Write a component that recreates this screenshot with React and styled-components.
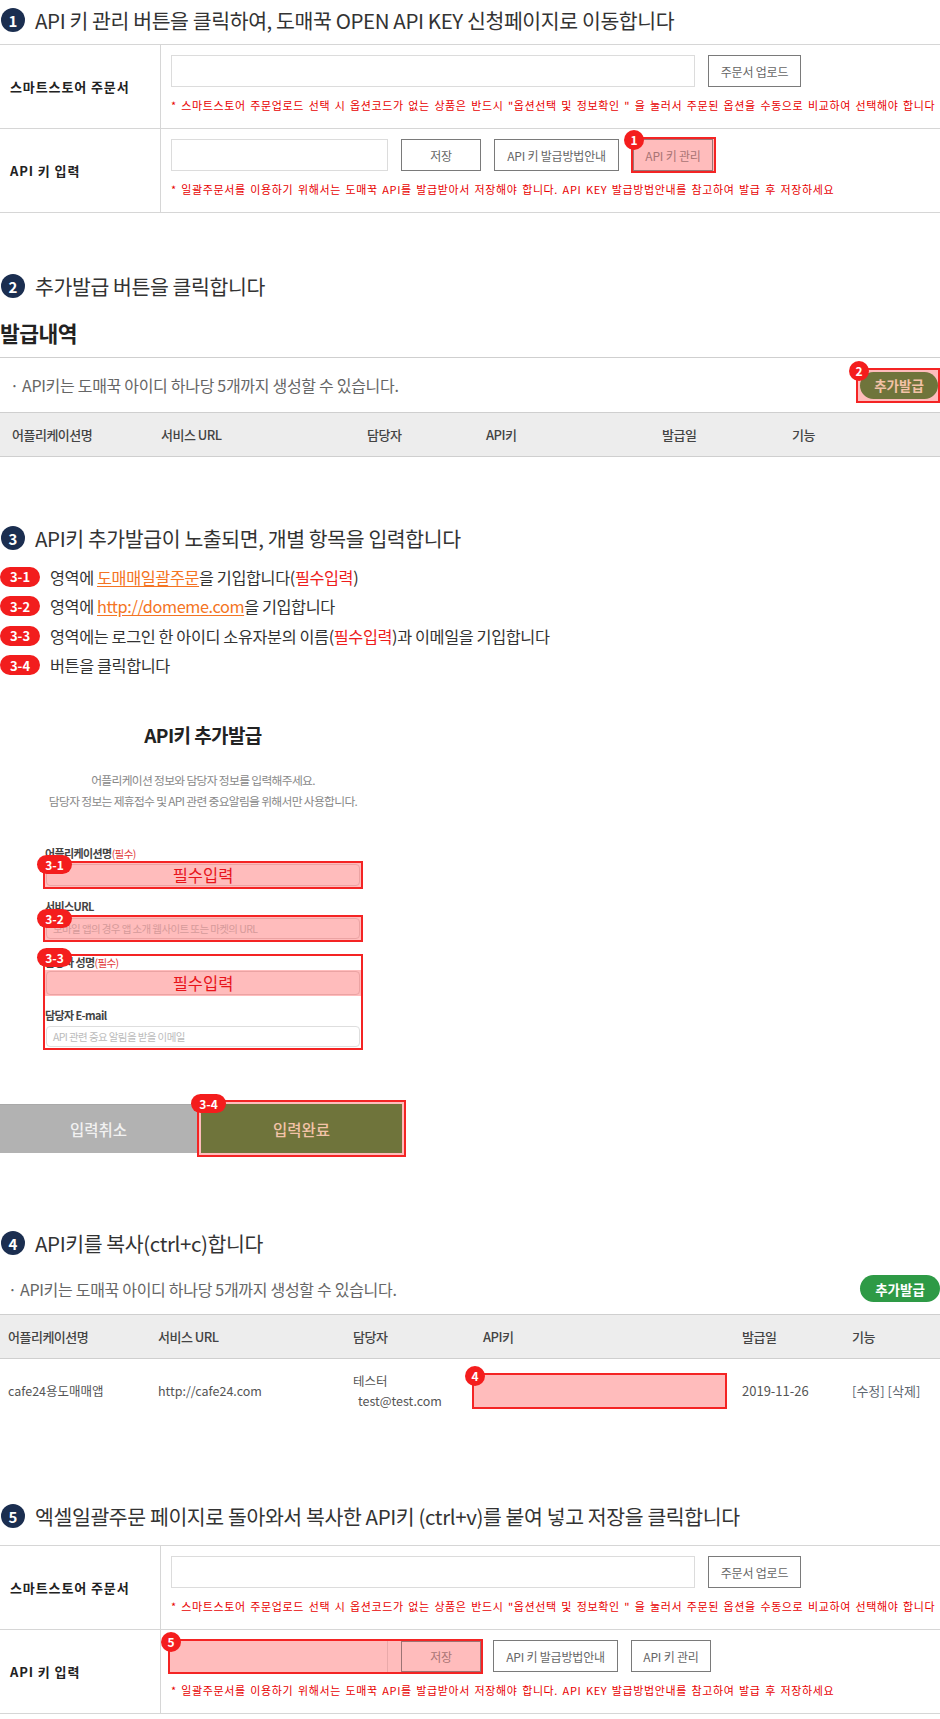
import React from 'react';
import styled, { createGlobalStyle } from 'styled-components';

const GlobalStyle = createGlobalStyle`
  * { box-sizing: border-box; }
  body {
    margin: 0;
    background: #fff;
    font-family: "Noto Sans CJK KR", "Noto Sans", sans-serif;
    color: #333;
  }
`;

const Page = styled.div`
  width: 940px;
  padding-bottom: 5px;
`;

const StepTitle = styled.h2`
  display: flex;
  align-items: center;
  gap: 10px;
  height: 40px;
  margin: ${p => p.$top || 0}px 0 ${p => p.$bottom || 0}px;
  font-size: 20.5px;
  font-weight: 400;
  letter-spacing: -0.4px;
  color: #333;
  white-space: nowrap;
`;

const StepNum = styled.span`
  flex: none;
  width: 24px;
  height: 24px;
  margin-left: 1px;
  border-radius: 50%;
  background: #1b2e50;
  color: #fff;
  font-size: 15px;
  font-weight: 700;
  letter-spacing: 0;
  display: flex;
  align-items: center;
  justify-content: center;
`;

/* ---------- form table (steps 1 & 5) ---------- */

const FormTable = styled.div`
  border-top: 1px solid #d6d6d6;
`;

const FormRow = styled.div`
  display: grid;
  grid-template-columns: 161px 1fr;
  border-bottom: 1px solid #d6d6d6;
`;

const RowLabel = styled.div`
  display: flex;
  align-items: center;
  padding-left: 10px;
  border-right: 1px solid #d6d6d6;
  font-size: 13px;
  font-weight: 700;
  letter-spacing: 0.9px;
  color: #222;
`;

const RowBody = styled.div`
  padding: 10px 10px 15px;
`;

const Controls = styled.div`
  display: flex;
  align-items: center;
  gap: 13px;
  height: 32px;
`;

const TextBox = styled.div`
  flex: none;
  width: ${p => p.$w}px;
  height: ${p => p.$h || 32}px;
  border: 1px solid #dcdcdc;
  background: #fff;
`;

const TintedBox = styled.div`
  flex: none;
  width: ${p => p.$w}px;
  height: 31px;
  border-right: 1px solid #e9a9a9;
`;

const GrayButton = styled.button`
  flex: none;
  width: ${p => p.$w}px;
  height: ${p => p.$h || 32}px;
  padding: 0;
  border: 1px solid ${p => (p.$tinted ? '#9c7474' : '#7a7a7a')};
  background: ${p => (p.$tinted ? 'transparent' : '#fff')};
  color: ${p => (p.$tinted ? '#a97474' : '#666')};
  font-family: inherit;
  font-size: 12px;
  letter-spacing: -0.2px;
`;

const Note = styled.p`
  margin: 10px 0 0;
  height: 16px;
  line-height: 16px;
  font-size: 11px;
  letter-spacing: 0.62px;
  word-spacing: 1.5px;
  color: #e80000;
  white-space: nowrap;
`;

/* ---------- highlight marks ---------- */

const Highlight = styled.div`
  position: relative;
  display: ${p => (p.$block ? 'block' : 'inline-flex')};
  align-items: center;
  gap: ${p => p.$gap || 0}px;
  flex: none;
  width: ${p => (p.$w ? `${p.$w}px` : 'auto')};
  height: ${p => (p.$h ? `${p.$h}px` : 'auto')};
  margin: ${p => p.$m || 0};
  padding: ${p => p.$pad || 0};
  border: 2px solid #f42424;
  background: ${p => (p.$clear ? '#fff' : '#ffbcbc')};
`;

const Badge = styled.span`
  position: absolute;
  left: ${p => (p.$wide ? -8 : -9)}px;
  top: ${p => (p.$wide ? -8 : -9)}px;
  z-index: 2;
  min-width: ${p => (p.$wide ? 35 : 20)}px;
  height: ${p => (p.$wide ? 19 : 20)}px;
  border-radius: 10px;
  background: #f41d1d;
  color: #fff;
  font-size: 12px;
  font-weight: 700;
  line-height: 1;
  display: flex;
  align-items: center;
  justify-content: center;
`;

/* ---------- issued list (steps 2 & 4) ---------- */

const BigTitle = styled.h1`
  margin: 13px 0 0;
  height: 28px;
  line-height: 28px;
  font-size: 21.5px;
  font-weight: 700;
  letter-spacing: -0.5px;
  color: #222;
`;

const ListBar = styled.div`
  display: flex;
  align-items: center;
  justify-content: space-between;
  height: ${p => p.$h}px;
  margin-top: ${p => p.$top || 0}px;
  padding-left: ${p => p.$pl}px;
  border-top: ${p => (p.$line ? '1px solid #cfcfcf' : 'none')};
  font-size: 16px;
  letter-spacing: -0.3px;
  color: #666;
`;

const PillButton = styled.button`
  height: 27px;
  padding: 0;
  border: none;
  border-radius: 14px;
  background: ${p => (p.$green ? '#2e9a46' : '#6f743b')};
  color: ${p => (p.$green ? '#fff' : '#f3c2a6')};
  font-family: inherit;
  font-size: 13.5px;
  font-weight: 700;
  width: ${p => (p.$green ? 80 : 78)}px;
`;

const ListGrid = styled.div`
  display: grid;
  grid-template-columns: ${p => p.$cols};
  align-items: center;
  padding-left: ${p => p.$pl}px;
`;

const ListHead = styled(ListGrid)`
  height: 45px;
  border-top: 1px solid #cfcfcf;
  border-bottom: 1px solid #cfcfcf;
  background: #ededed;
  font-size: 13px;
  font-weight: 500;
  letter-spacing: -0.5px;
  color: #444;
`;

const ListRow = styled(ListGrid)`
  height: 63px;
  font-size: 12.5px;
  color: #555;
`;

const Person = styled.div`
  line-height: 20px;
  & > span {
    display: block;
    padding-left: 5px;
  }
`;

const DateText = styled.span`
  font-size: 13px;
`;

const Actions = styled.span`
  color: #5d6670;
  font-size: 13px;
`;

/* ---------- step 3 guide ---------- */

const GuideList = styled.ul`
  list-style: none;
  margin: 4px 0 0;
  padding: 0;
`;

const GuideItem = styled.li`
  display: flex;
  align-items: center;
  gap: 10px;
  height: 29.5px;
  font-size: 16.3px;
  letter-spacing: -0.4px;
  color: #333;
  white-space: nowrap;
`;

const StepPill = styled.span`
  flex: none;
  width: 40px;
  height: 20px;
  border-radius: 10px;
  background: #f21d1d;
  color: #fff;
  font-size: 13px;
  font-weight: 700;
  letter-spacing: 0;
  display: flex;
  align-items: center;
  justify-content: center;
`;

const LinkText = styled.span`
  color: #f47423;
  text-decoration: underline;
  text-underline-offset: 2px;
`;

const Required = styled.span`
  color: #ee1c1c;
`;

/* ---------- step 3 modal capture ---------- */

const Modal = styled.div`
  width: 406px;
  margin-top: 42px;
`;

const ModalTitle = styled.h3`
  margin: 0;
  height: 26px;
  line-height: 26px;
  text-align: center;
  font-size: 19px;
  font-weight: 700;
  letter-spacing: -0.6px;
  color: #222;
`;

const ModalDesc = styled.p`
  margin: 21px 0 0;
  text-align: center;
  font-size: 11.8px;
  line-height: 21px;
  letter-spacing: -0.7px;
  color: #888;
`;

const Fields = styled.div`
  width: 320px;
  margin: 35px auto 0;
`;

const FieldLabel = styled.div`
  height: ${p => p.$h || 14}px;
  line-height: ${p => p.$h || 14}px;
  margin-top: ${p => p.$top || 0}px;
  padding-left: ${p => p.$pl ?? 2}px;
  font-size: 11px;
  font-weight: 700;
  letter-spacing: -0.6px;
  color: #444;
  white-space: nowrap;
  & > em {
    font-style: normal;
    font-weight: 400;
    font-size: 10.5px;
    color: #e23a3a;
  }
`;

const FieldInput = styled.div`
  height: ${p => p.$h}px;
  margin: ${p => p.$m || 0};
  border: 1px solid ${p => (p.$white ? '#dedede' : '#eba3a3')};
  border-radius: 4px;
  background: ${p => (p.$white ? '#fff' : 'transparent')};
  display: flex;
  align-items: center;
  justify-content: ${p => (p.$center ? 'center' : 'flex-start')};
  padding-left: ${p => (p.$center ? 0 : 6)}px;
  font-size: ${p => (p.$center ? 16.5 : 10.5)}px;
  letter-spacing: ${p => (p.$center ? 0 : -0.6)}px;
  color: ${p => (p.$center ? '#e8141b' : p.$white ? '#bbb' : '#d59a9a')};
  white-space: nowrap;
`;

const PinkBand = styled.div`
  margin-top: 2px;
  height: 26px;
  padding: 1px;
  background: #ffbcbc;
`;

const ModalButtons = styled.div`
  display: flex;
  align-items: center;
  margin-top: 50px;
`;

const CancelButton = styled.button`
  width: 199px;
  height: 49px;
  padding: 0;
  border: none;
  border-top: 1px solid #a9a9a9;
  background: #b2b2b2;
  color: #f1f1f1;
  font-family: inherit;
  font-size: 15.5px;
  font-weight: 500;
`;

const ConfirmButton = styled.button`
  width: 201px;
  height: 49px;
  padding: 0;
  border: none;
  background: #6f743b;
  color: #f2c3a8;
  font-family: inherit;
  font-size: 15.5px;
  font-weight: 500;
`;

const SMART_NOTE =
  '* 스마트스토어 주문업로드 선택 시 옵션코드가 없는 상품은 반드시 "옵션선택 및 정보확인 " 을 눌러서 주문된 옵션을 수동으로 비교하여 선택해야 합니다';
const KEY_NOTE =
  '* 일괄주문서를 이용하기 위해서는 도매꾹 API를 발급받아서 저장해야 합니다. API KEY 발급방법안내를 참고하여 발급 후 저장하세요';

const LIST_COLS_A = '149px 206px 119px 176px 130px 1fr';
const LIST_COLS_B = '150px 195px 130px 259px 110px 1fr';

function SmartStoreRow() {
  return (
    <FormRow>
      <RowLabel>스마트스토어 주문서</RowLabel>
      <RowBody>
        <Controls>
          <TextBox $w={524} />
          <GrayButton $w={93}>주문서 업로드</GrayButton>
        </Controls>
        <Note>{SMART_NOTE}</Note>
      </RowBody>
    </FormRow>
  );
}

function ListHeader({ cols, pl }) {
  return (
    <ListHead $pl={pl} $cols={cols}>
      <span>어플리케이션명</span>
      <span>서비스 URL</span>
      <span>담당자</span>
      <span>API키</span>
      <span>발급일</span>
      <span>기능</span>
    </ListHead>
  );
}

function App() {
  return (
    <Page>
      <GlobalStyle />

      {/* step 1 */}
      <StepTitle $bottom={4}>
        <StepNum>1</StepNum>
        API 키 관리 버튼을 클릭하여, 도매꾹 OPEN API KEY 신청페이지로 이동합니다
      </StepTitle>
      <FormTable>
        <SmartStoreRow />
        <FormRow>
          <RowLabel>API 키 입력</RowLabel>
          <RowBody>
            <Controls>
              <TextBox $w={217} />
              <GrayButton $w={80}>저장</GrayButton>
              <GrayButton $w={125}>API 키 발급방법안내</GrayButton>
              <Highlight $m="-2px 0 -2px -1px" $pad="0 1px 0 0">
                <Badge>1</Badge>
                <GrayButton $w={80} $tinted>API 키 관리</GrayButton>
              </Highlight>
            </Controls>
            <Note>{KEY_NOTE}</Note>
          </RowBody>
        </FormRow>
      </FormTable>

      {/* step 2 */}
      <StepTitle $top={53}>
        <StepNum>2</StepNum>
        추가발급 버튼을 클릭합니다
      </StepTitle>
      <BigTitle>발급내역</BigTitle>
      <ListBar $h={55} $top={10} $pl={10} $line>
        · API키는 도매꾹 아이디 하나당 5개까지 생성할 수 있습니다.
        <Highlight $pad="2px 0 2px 2px">
          <Badge>2</Badge>
          <PillButton>추가발급</PillButton>
        </Highlight>
      </ListBar>
      <ListHeader cols={LIST_COLS_A} pl={12} />

      {/* step 3 */}
      <StepTitle $top={61}>
        <StepNum>3</StepNum>
        API키 추가발급이 노출되면, 개별 항목을 입력합니다
      </StepTitle>
      <GuideList>
        <GuideItem>
          <StepPill>3-1</StepPill>
          <span>
            영역에 <LinkText>도매매일괄주문</LinkText>을 기입합니다(<Required>필수입력</Required>)
          </span>
        </GuideItem>
        <GuideItem>
          <StepPill>3-2</StepPill>
          <span>
            영역에 <LinkText>http://domeme.com</LinkText>을 기입합니다
          </span>
        </GuideItem>
        <GuideItem>
          <StepPill>3-3</StepPill>
          <span>
            영역에는 로그인 한 아이디 소유자분의 이름(<Required>필수입력</Required>)과 이메일을 기입합니다
          </span>
        </GuideItem>
        <GuideItem>
          <StepPill>3-4</StepPill>
          <span>버튼을 클릭합니다</span>
        </GuideItem>
      </GuideList>

      <Modal>
        <ModalTitle>API키 추가발급</ModalTitle>
        <ModalDesc>
          어플리케이션 정보와 담당자 정보를 입력해주세요.
          <br />
          담당자 정보는 제휴접수 및 API 관련 중요알림을 위해서만 사용합니다.
        </ModalDesc>
        <Fields>
          <FieldLabel>
            어플리케이션명<em>(필수)</em>
          </FieldLabel>
          <Highlight $block $h={28} $m="1px 0 0" $pad="1px">
            <Badge $wide>3-1</Badge>
            <FieldInput $h={22} $center>필수입력</FieldInput>
          </Highlight>

          <FieldLabel $top={10}>서비스URL</FieldLabel>
          <Highlight $block $h={27} $m="2px 0 0" $pad="1px">
            <Badge $wide>3-2</Badge>
            <FieldInput $h={21}>모바일 앱의 경우 앱 소개 웹사이트 또는 마켓의 URL</FieldInput>
          </Highlight>

          <Highlight $block $clear $h={96} $m="12px 0 0">
            <Badge $wide>3-3</Badge>
            <FieldLabel $h={12} $pl={0}>
              담당자 성명<em>(필수)</em>
            </FieldLabel>
            <PinkBand>
              <FieldInput $h={24} $center>필수입력</FieldInput>
            </PinkBand>
            <FieldLabel $top={12} $pl={0}>담당자 E-mail</FieldLabel>
            <FieldInput $h={21} $white $m="4px 1px 0">
              API 관련 중요 알림을 받을 이메일
            </FieldInput>
          </Highlight>
        </Fields>
        <ModalButtons>
          <CancelButton>입력취소</CancelButton>
          <Highlight $pad="2px">
            <Badge $wide>3-4</Badge>
            <ConfirmButton>입력완료</ConfirmButton>
          </Highlight>
        </ModalButtons>
      </Modal>

      {/* step 4 */}
      <StepTitle $top={66}>
        <StepNum>4</StepNum>
        API키를 복사(ctrl+c)합니다
      </StepTitle>
      <ListBar $h={51} $pl={8}>
        · API키는 도매꾹 아이디 하나당 5개까지 생성할 수 있습니다.
        <PillButton $green>추가발급</PillButton>
      </ListBar>
      <ListHeader cols={LIST_COLS_B} pl={8} />
      <ListRow $pl={8} $cols={LIST_COLS_B}>
        <span>cafe24용도매매앱</span>
        <span>http://cafe24.com</span>
        <Person>
          테스터
          <span>test@test.com</span>
        </Person>
        <Highlight $w={255} $h={36} $m="0 0 0 -11px">
          <Badge>4</Badge>
        </Highlight>
        <DateText>2019-11-26</DateText>
        <Actions>[수정] [삭제]</Actions>
      </ListRow>

      {/* step 5 */}
      <StepTitle $top={74} $bottom={9}>
        <StepNum>5</StepNum>
        엑셀일괄주문 페이지로 돌아와서 복사한 API키 (ctrl+v)를 붙여 넣고 저장을 클릭합니다
      </StepTitle>
      <FormTable>
        <SmartStoreRow />
        <FormRow>
          <RowLabel>API 키 입력</RowLabel>
          <RowBody>
            <Controls>
              <Highlight $gap={13} $m="-2px -3px -2px -3px">
                <Badge>5</Badge>
                <TintedBox $w={218} />
                <GrayButton $w={80} $h={31} $tinted>저장</GrayButton>
              </Highlight>
              <GrayButton $w={125}>API 키 발급방법안내</GrayButton>
              <GrayButton $w={80}>API 키 관리</GrayButton>
            </Controls>
            <Note>{KEY_NOTE}</Note>
          </RowBody>
        </FormRow>
      </FormTable>
    </Page>
  );
}

export default App;
